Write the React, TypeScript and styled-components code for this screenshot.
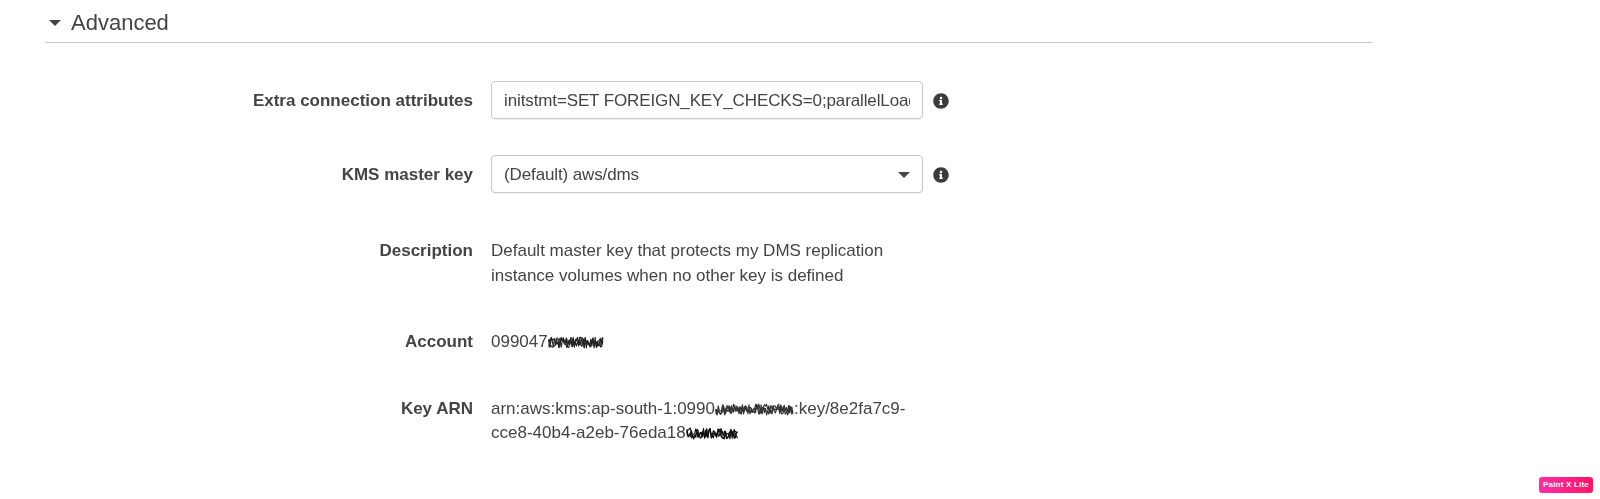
import React from "react";
import styled, { createGlobalStyle } from "styled-components";
import { FaInfoCircle } from "react-icons/fa";

const Global = createGlobalStyle`
  html, body { margin: 0; padding: 0; background: #fff; }
  body { font-family: "Liberation Sans", Arial, sans-serif; color: #444; width: 1600px; height: 499px; overflow: hidden; position: relative; }
`;

const Section = styled.section`
  width: 1327px;
  margin-left: 45px;
  filter: blur(0.35px);
`;

const Header = styled.header`
  display: flex;
  align-items: center;
  gap: 10px;
  height: 38px;
  padding: 4px 0 0 4px;
  border-bottom: 1px solid #c9c9c9;
  box-sizing: content-box;
`;

const Caret = styled.span`
  display: block;
  width: 0;
  height: 0;
  border-left: 6px solid transparent;
  border-right: 6px solid transparent;
  border-top: 6px solid #444;
`;

const Title = styled.h2`
  margin: 0;
  font-size: 22px;
  font-weight: 400;
  line-height: 24px;
  color: #444;
`;

const Form = styled.div`
  display: grid;
  grid-template-columns: 428px 432px 26px;
  column-gap: 18px;
  row-gap: 36px;
  padding-top: 38px;
  align-items: start;
  & > * { min-width: 0; }
`;

const FormControlRow = styled.div`
  display: contents;
`;

const Label = styled.div<{ $top?: number }>`
  font-size: 17px;
  font-weight: 700;
  line-height: 24px;
  text-align: right;
  color: #444;
  margin-top: ${(p) => p.$top ?? 0}px;
`;

const Field = styled.div`
  height: 38px;
  box-sizing: border-box;
  border: 1px solid #c8c8c8;
  border-radius: 4px;
  background: #fff;
  box-shadow: 0 1px 1px rgba(0, 0, 0, 0.06);
  padding: 1px 12px 0;
  display: flex;
  align-items: center;
  justify-content: space-between;
  font-size: 17px;
  color: #444;
`;

const FieldText = styled.span`
  display: block;
  overflow: hidden;
  white-space: nowrap;
  flex: 1;
  letter-spacing: -0.12px;
`;

const InfoSlot = styled.div`
  height: 38px;
  display: flex;
  align-items: center;
  margin-left: -8px;
  padding-top: 2px;
  box-sizing: border-box;
  color: #3b3b3b;
`;

const Value = styled.div<{ $top: number }>`
  grid-column: 2 / span 2;
  font-size: 17px;
  line-height: 24.5px;
  color: #444;
  width: 432px;
  margin-top: ${(p) => p.$top}px;
`;

const Masked = styled.span`
  display: inline-block;
  vertical-align: -3px;
  height: 15px;
`;

const ScribbleSvg = styled.svg`
  display: block;
`;

const Badge = styled.div`
  position: absolute;
  left: 1539px;
  top: 477px;
  width: 54px;
  height: 16px;
  border-radius: 3px;
  background: linear-gradient(90deg, #ff2ea6, #ff1464);
  color: #fff;
  font-size: 8px;
  font-weight: 700;
  line-height: 16px;
  text-align: center;
  letter-spacing: 0.2px;
`;

function Scribble({ width, seed, color }: { width: number; seed: number; color: string }) {
  let s = seed;
  const passes = [0, 1, 2].map(() => {
    let d = "M1 7";
    for (let x = 1; x < width - 1; x += 1.1) {
      s = (s * 9301 + 49297) % 233280;
      const y = 2 + (s / 233280) * 11;
      d += ` L${x.toFixed(1)} ${y.toFixed(1)}`;
    }
    return d;
  });
  return (
    <Masked>
      <ScribbleSvg width={width} height={15} viewBox={`0 0 ${width} 15`} fill="none">
        {passes.map((d, i) => (
          <path key={i} d={d} stroke={color} strokeWidth="1.1" strokeLinejoin="round" />
        ))}
      </ScribbleSvg>
    </Masked>
  );
}

export default function App() {
  return (
    <>
      <Global />
      <Section>
        <Header>
          <Caret />
          <Title>Advanced</Title>
        </Header>
        <Form>
          <FormControlRow>
            <Label $top={8}>Extra connection attributes</Label>
            <Field>
              <FieldText>initstmt=SET FOREIGN_KEY_CHECKS=0;parallelLoadThreads=1</FieldText>
            </Field>
            <InfoSlot><FaInfoCircle size={16} /></InfoSlot>
          </FormControlRow>
          <FormControlRow>
            <Label $top={8}>KMS master key</Label>
            <Field>
              <FieldText>(Default) aws/dms</FieldText>
              <Caret />
            </Field>
            <InfoSlot><FaInfoCircle size={16} /></InfoSlot>
          </FormControlRow>
          <FormControlRow>
            <Label $top={10}>Description</Label>
            <Value $top={10}>
              Default master key that protects my DMS replication
              <br />
              instance volumes when no other key is defined
            </Value>
          </FormControlRow>
          <FormControlRow>
            <Label $top={6}>Account</Label>
            <Value $top={6}>
              099047
              <Scribble width={56} seed={17} color="#222" />
            </Value>
          </FormControlRow>
          <FormControlRow>
            <Label $top={6}>Key ARN</Label>
            <Value $top={6}>
              arn:aws:kms:ap-south-1:0990
              <Scribble width={79} seed={41} color="#333" />
              :key/8e2fa7c9-
              <br />
              cce8-40b4-a2eb-76eda18
              <Scribble width={53} seed={73} color="#111" />
            </Value>
          </FormControlRow>
        </Form>
      </Section>
      <Badge>Paint X Lite</Badge>
    </>
  );
}
